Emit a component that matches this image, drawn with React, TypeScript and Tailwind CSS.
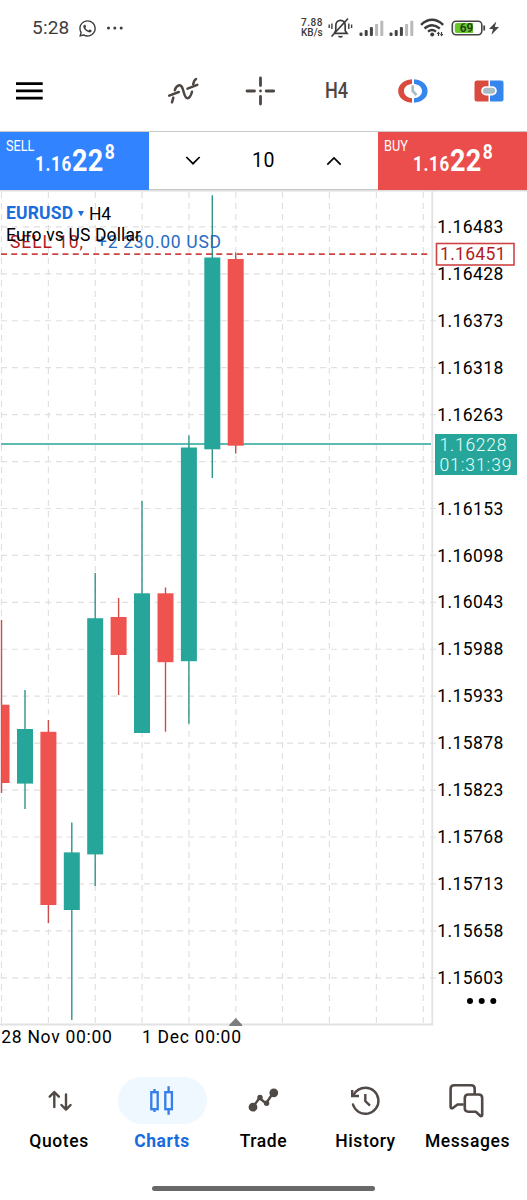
import { FaWhatsapp } from "react-icons/fa";
import clsx from "clsx";

interface Candle {
  x: number;
  high: number;
  low: number;
  top: number;
  bottom: number;
  up: boolean;
}

const UP = "#26a69a";
const DOWN = "#ef5350";

const candles: Candle[] = [
  { x: 1.5, high: 430, low: 603, top: 514.7, bottom: 593, up: false },
  { x: 25, high: 500, low: 619, top: 539, bottom: 593.6, up: true },
  { x: 48.4, high: 530, low: 733, top: 541.8, bottom: 715, up: false },
  { x: 71.8, high: 632.4, low: 830, top: 662.4, bottom: 720, up: true },
  { x: 95.2, high: 383, low: 696, top: 428.2, bottom: 664.4, up: true },
  { x: 118.6, high: 408, low: 505, top: 427, bottom: 465, up: false },
  { x: 142, high: 311, low: 543, top: 403.3, bottom: 543, up: true },
  { x: 165.5, high: 397.5, low: 541.7, top: 403.3, bottom: 472.2, up: false },
  { x: 188.9, high: 245.5, low: 533.7, top: 257.5, bottom: 471.2, up: true },
  { x: 212.3, high: 5.3, low: 288, top: 67.5, bottom: 259.3, up: true },
  { x: 235.7, high: 62.5, low: 263.5, top: 69, bottom: 255.7, up: false },
];

const prices = [
  "1.16483", "1.16428", "1.16373", "1.16318", "1.16263", "", "1.16153", "1.16098",
  "1.16043", "1.15988", "1.15933", "1.15878", "1.15823", "1.15768", "1.15713", "1.15658", "1.15603",
];

const priceY = (i: number) => 36.9 + i * 46.93;
const columns = [1.5, 48.4, 95.3, 142.1, 189, 235.8, 282.5, 329.4, 376.4, 423.3];

function Signal() {
  return (
    <svg width="25" height="17" viewBox="0 0 25 17">
      <g fill="#444">
        <rect x="0.5" y="12.5" width="3" height="3.5" rx="1" />
        <rect x="5.7" y="10" width="3" height="6" rx="1" />
        <rect x="10.9" y="7" width="3" height="9" rx="1" />
      </g>
      <g fill="#b9b9b9">
        <rect x="16.1" y="4" width="3" height="12" rx="0.8" />
        <rect x="21.3" y="0.8" width="3" height="15.2" rx="0.8" />
      </g>
    </svg>
  );
}

function StatusBar() {
  return (
    <div className="flex h-14 items-center pl-8 text-[#3c3c3c]">
      <span className="w-12 text-[19px] leading-6 tracking-[0.2px]">5:28</span>
      <FaWhatsapp className="-ml-0.5 size-[19px]" />
      <svg className="ml-[9px]" width="18" height="6" viewBox="0 0 18 6" fill="currentColor">
        <circle cx="2.5" cy="3" r="1.5" />
        <circle cx="8.8" cy="3" r="1.5" />
        <circle cx="15.2" cy="3" r="1.5" />
      </svg>
      <div className="ml-[177px] w-[23px] text-[10px] font-medium leading-[10.5px] tracking-[0.5px]">
        <div>7.88</div>
        <div className="tracking-normal">KB/s</div>
      </div>
      <svg className="ml-1" width="25" height="22" viewBox="0 0 25 22" fill="none" stroke="currentColor" strokeWidth="1.7">
        <path d="M6.5 16.3H19L17.2 13.8V8.5C17.2 5.7 15.4 3.4 12.5 3.4S7.8 5.7 7.8 8.5V13.5L6.3 16.3" />
        <path d="M10.5 19.2Q12.5 20.5 14.5 19.2M3.5 19.5L20 1.5" />
        <path d="M3.9 6.5V12M1.2 7.5V11M20.8 6.5V12M23.6 7.5V11" strokeWidth="1.4" />
      </svg>
      <div className="ml-[6px] flex gap-[5px]">
        <Signal />
        <Signal />
      </div>
      <svg className="ml-[6px]" width="25" height="20" viewBox="0 0 25 20" fill="none" stroke="currentColor" strokeWidth="2.4">
        <path d="M1 6.8Q12 -3.2 23.2 6.8M4.5 10.5Q12 3.8 19.8 10.5M8 13.6Q12 10.4 16 13.6" />
        <circle cx="12.2" cy="16.6" r="2" fill="currentColor" stroke="none" />
        <path d="M18.5 14.5V18M21.5 14V17.5" strokeWidth="1.2" />
        <path d="M16.6 16L18.5 13.4L20 16zM20 16L21.6 18.6L23.4 16z" fill="currentColor" stroke="none" />
      </svg>
      <svg className="ml-[6px]" width="50" height="18" viewBox="0 0 50 18">
        <rect x="1.3" y="2.3" width="29.5" height="13.4" rx="3.6" fill="#fff" stroke="#444" strokeWidth="1.6" />
        <path d="M6 4H22V14H6Q3.8 14 3.8 12V6Q3.8 4 6 4Z" fill="#65c728" />
        <path d="M33.2 6.5V11.5" stroke="#444" strokeWidth="1.8" />
        <text x="8.7" y="13.3" textLength="13.5" lengthAdjust="spacingAndGlyphs" fontSize="12.5" fontWeight="600" fill="#263d1b">69</text>
        <path d="M45.3 2.5L38 10H42L40.5 15.8L48 8H43.8Z" fill="#444" />
      </svg>
    </div>
  );
}

function Toolbar() {
  return (
    <div className="flex h-[75px] items-center pb-[6px] pl-4 text-[#4d4643]">
      <svg width="27" height="20" viewBox="0 0 27 20" stroke="#000" strokeWidth="2.7">
        <path d="M0 2.6H26.7M0 9.8H26.7M0 17.1H26.7" />
      </svg>
      <svg className="ml-[124px]" width="32" height="28" viewBox="0 0 32 28" fill="none" stroke="currentColor" strokeWidth="2.5" strokeLinecap="round">
        <path d="M5 25.3L6.3 20.6M7.8 13.2C9.3 8.2 13.5 6.3 15.5 11.3C17.2 15.6 17.5 21.2 20.5 21.2C23 21.2 24.1 18.3 25 14.8M26.2 7.2Q27 3.2 29 2" />
        <path d="M2.2 18.6L11.8 15M20.5 11.6L30.3 7.8" />
      </svg>
      <svg className="ml-[45px]" width="32" height="30" viewBox="0 0 32 30" stroke="currentColor" strokeWidth="2.8" strokeLinecap="round">
        <path d="M16.5 2V9.5M16.5 20.5V28M3 15H10.5M22.2 15H29.7M16.5 15H16.51" />
      </svg>
      <div className="ml-[49px] w-[26px] origin-left scale-x-[0.84] text-[21.5px] font-medium leading-6">H4</div>
      <svg className="ml-[47px]" width="30" height="24" viewBox="0 0 30 24">
        <path d="M14 0.2C5 1 0.2 6 0.2 12S5 23 14 23.8V19.3C9 18.5 6 16 6 12S9 5.5 14 4.7Z" fill="#d94b3f" />
        <path d="M16 0.2C25 1 29.6 6 29.6 12S25 23 16 23.8V19.3C21 18.5 24 16 24 12S21 5.5 16 4.7Z" fill="#3486ee" />
        <path d="M14.7 6.2V12L18.5 16.2" fill="none" stroke="#a8bcc5" strokeWidth="2.7" />
      </svg>
      <svg className="ml-[46px]" width="30" height="22" viewBox="0 0 30 22">
        <path d="M14.5 0.5H3Q0.5 0.5 0.5 3V19Q0.5 21.5 3 21.5H14.5Z" fill="#d94b3f" />
        <path d="M16 0.5H27Q29.5 0.5 29.5 3V19Q29.5 21.5 27 21.5H16Z" fill="#3486ee" />
        <rect x="8" y="7" width="14" height="7.6" rx="3.8" fill="#a8bcc5" stroke="#fff" strokeWidth="1.7" />
      </svg>
    </div>
  );
}

function QuoteButton({ side, className }: { side: string; className: string }) {
  return (
    <button className={clsx("flex h-[58px] flex-col items-start pl-[6px] pt-[5px] text-white", className)}>
      <span className="origin-left scale-x-[0.82] text-[15.5px] leading-[18px]">{side}</span>
      <span className="-mt-[11px] ml-[29px] flex origin-left scale-x-[0.87] items-baseline font-bold leading-[34px]">
        <span className="text-[19.5px] tracking-[0.8px]">1.16</span>
        <span className="text-[31px] tracking-[0.3px]">22</span>
        <span className="relative -top-[12px] ml-[1.5px] text-[20px]">8</span>
      </span>
    </button>
  );
}

function TradePanel() {
  return (
    <div className="flex h-[59px] border-t border-[#c8c8c8]">
      <QuoteButton side="SELL" className="w-[149px] bg-[#3183ff]" />
      <div className="flex h-[58px] flex-1 items-center justify-between border-b border-[#c8c8c8] px-9 text-black">
        <svg width="16" height="10" viewBox="0 0 16 10" fill="none" stroke="currentColor" strokeWidth="1.7">
          <path d="M1.3 1L8 7.7L14.7 1" />
        </svg>
        <span className="text-[19.5px] tracking-[0.5px]">10</span>
        <svg width="16" height="10" viewBox="0 0 16 10" fill="none" stroke="currentColor" strokeWidth="1.7">
          <path d="M1.3 8.7L8 2L14.7 8.7" />
        </svg>
      </div>
      <QuoteButton side="BUY" className="w-[149px] bg-[#eb4d4c]" />
    </div>
  );
}

function Chart() {
  return (
    <svg className="block" width="527" height="864" viewBox="0 0 527 864" fontSize="17.5">
      <path d="M0 0.7H527" stroke="#dedede" strokeWidth="1.6" />
      <g stroke="#e0e0e0" strokeWidth="1.2">
        {columns.map((x) => (
          <path key={x} d={`M${x} 2V834`} strokeDasharray="6 5" />
        ))}
        {prices.map((_, i) => (
          <path key={i} d={`M1 ${priceY(i)}H436`} strokeDasharray="6 5" />
        ))}
      </g>
      <path d="M432.3 1V834.5H0" fill="none" stroke="#e2e2e2" strokeWidth="1.8" />

      <path d="M1 254H431" stroke={UP} strokeWidth="1.4" />
      {candles.map((c) => {
        const left = Math.max(c.x - 8, 1.5);
        return (
          <g key={c.x}>
            <path d={`M${c.x} ${c.high}V${c.low}`} stroke={c.up ? "#2f9588" : "#d04a4a"} strokeWidth="1.4" />
            <rect x={left} y={c.top} width={c.x + 8 - left} height={c.bottom - c.top} fill={c.up ? UP : DOWN} />
          </g>
        );
      })}
      <path d="M1 64.2H431" stroke="#cc4444" strokeWidth="1.8" strokeDasharray="6 4.25" />

      <text x="10" y="58" fill="#b31b1e" textLength="73">SELL 10,</text>
      <text x="97" y="58" fill="#2a6bc2" textLength="124">+2 230.00 USD</text>
      <text x="6" y="29.3" fontWeight="700" fill="#1b6ddc" textLength="67">EURUSD</text>
      <path d="M78 21H84L81 26.5Z" fill="#1b6ddc" />
      <text x="89" y="29.5" textLength="22">H4</text>
      <text x="6" y="51" textLength="135">Euro vs US Dollar</text>

      {prices.map((p, i) => (
        <text key={i} x="437.3" y={priceY(i) + 6.1} textLength="66">{p}</text>
      ))}
      <rect x="436.5" y="53.5" width="77.5" height="21.5" fill="#fff" stroke="#cc4444" strokeWidth="1.6" />
      <text x="440" y="70.2" fill="#b31b1e" textLength="65.5">1.16451</text>
      <rect x="435" y="244" width="82" height="41" fill={UP} />
      <g fill="#eafffb" fontWeight="300">
        <text x="439.5" y="260.5" textLength="67">1.16228</text>
        <text x="439.5" y="280.7" textLength="72">01:31:39</text>
      </g>

      <path d="M229 836Q229.5 834 231 833L235.8 828L240.5 833Q242 834 242.3 836Z" fill="#7d7d7d" />
      <circle cx="470" cy="811" r="3" />
      <circle cx="481.7" cy="811" r="3" />
      <circle cx="493.3" cy="811" r="3" />
      <text x="1.3" y="853.3" textLength="110.5">28 Nov 00:00</text>
      <text x="142" y="853.3" textLength="99">1 Dec 00:00</text>
    </svg>
  );
}

const tabs = [
  {
    label: "Quotes",
    width: "w-[118px]",
    icon: (
      <g fill="none" stroke="currentColor" strokeWidth="2.4" strokeLinecap="round" strokeLinejoin="round">
        <path d="M15.3 26V11.5M10.7 15.7L15.3 11L19.9 15.7M27 13.5V28.3M22.4 24L27 28.6L31.6 24" />
      </g>
    ),
  },
  {
    label: "Charts",
    width: "w-[88px]",
    icon: (
      <g fill="none" stroke="currentColor" strokeWidth="2.3">
        <rect x="9.3" y="11.2" width="6.4" height="17" />
        <path d="M12.5 8V11M12.5 28V31M26.6 5.2V11M26.6 28V33.8" />
        <rect x="23.3" y="11.2" width="6.6" height="17" />
      </g>
    ),
  },
  {
    label: "Trade",
    width: "w-[115px]",
    icon: (
      <g fill="currentColor" stroke="currentColor" strokeWidth="2.4">
        <path d="M8.5 26.5L15.5 17L22 22.5L29 12" fill="none" />
        <circle cx="9" cy="26.2" r="3.2" />
        <circle cx="16" cy="16.5" r="1.5" />
        <circle cx="22.6" cy="22.3" r="1.5" />
        <circle cx="29.8" cy="11.8" r="3.2" />
      </g>
    ),
  },
  {
    label: "History",
    width: "w-[89px]",
    icon: (
      <g fill="none" stroke="currentColor" strokeWidth="2.4">
        <path d="M7.5 14C10.3 9 14.2 6.8 19.5 6.8A13 13 0 1 1 7 23.5" strokeLinecap="round" />
        <path d="M6.2 9V15H13" />
        <path d="M19.3 13V20L24 24.7" />
      </g>
    ),
  },
  {
    label: "Messages",
    width: "w-[115px]",
    icon: (
      <g fill="none" stroke="currentColor" strokeWidth="2.6" strokeLinejoin="round">
        <path d="M15.7 23.5H9.5L4.5 27.3Q2.6 27.5 2.6 25.5V8Q2.6 4.3 6.3 4.3H23Q26.7 4.3 26.7 8V13" />
        <path d="M20.3 13.5H30.5Q34.2 13.5 34.2 17V33.8Q34 35.5 32.5 35L27.8 30.7H20.3Q16.8 30.7 16.8 27.5V17Q16.8 13.5 20.3 13.5Z" />
      </g>
    ),
  },
];

function TabBar() {
  return (
    <nav className="flex h-[146px] flex-col items-center">
      <div className="flex w-full pt-[23px]">
        {tabs.map((tab) => {
          const active = tab.label === "Charts";
          return (
            <button key={tab.label} className={clsx("flex flex-col items-center", tab.width)}>
              <span
                className={clsx(
                  "flex h-[47px] w-[89px] items-center justify-center rounded-full",
                  active ? "bg-[#eff7ff] text-[#347ee9]" : "text-[#514946]"
                )}
              >
                <svg width="40" height="40" viewBox="0 0 40 40">{tab.icon}</svg>
              </span>
              <span
                className={clsx(
                  "mt-[5px] text-[17.5px] leading-6",
                  active ? "font-bold tracking-[0.5px] text-[#176be0]" : "font-medium tracking-[0.6px] text-black"
                )}
              >
                {tab.label}
              </span>
            </button>
          );
        })}
      </div>
      <div className="mt-[33px] h-[5px] w-[223px] rounded-full bg-[#686868]" />
    </nav>
  );
}

export default function App() {
  return (
    <div className="flex h-[1200px] w-[527px] flex-col overflow-hidden bg-white font-[Roboto,sans-serif] text-black">
      <StatusBar />
      <Toolbar />
      <TradePanel />
      <Chart />
      <TabBar />
    </div>
  );
}
